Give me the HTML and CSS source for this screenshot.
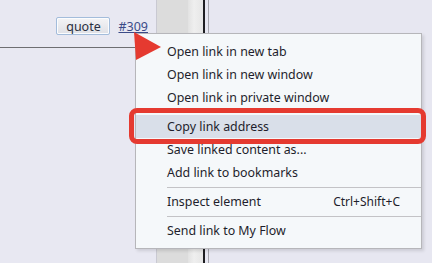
FILE: index.html
```html
<!DOCTYPE html>
<html>
<head>
  <title>Thread</title>
  <link rel="stylesheet" href="styles.css">
</head>
<body>
  <div class="window">
    <div class="thread">
      <div class="post">
        <div class="post-footer">
          <button class="quote">quote</button>
          <a class="permalink" href="#309">#309</a>
        </div>
      </div>
    </div>
    <div class="scroll-track"></div>
    <div class="scroll-edge"></div>
    <div class="frame-line"></div>
    <div class="frame-gap"></div>
    <div class="frame-line light"></div>
    <div class="desk"></div>
  </div>

  <ul class="context-menu">
    <li class="item">Open link in new tab</li>
    <li class="item">Open link in new window</li>
    <li class="item">Open link in private window</li>
    <li class="sep"></li>
    <li class="item active">Copy link address</li>
    <li class="item">Save linked content as...</li>
    <li class="item">Add link to bookmarks</li>
    <li class="sep"></li>
    <li class="item">Inspect element <span class="shortcut">Ctrl+Shift+C</span></li>
    <li class="sep"></li>
    <li class="item">Send link to My Flow</li>
  </ul>

  <div class="callout"></div>
  <svg class="pointer" width="30" height="30" viewBox="0 0 30 30">
    <polygon points="0,0 27,15 2,28" fill="#e53a30"/>
  </svg>
</body>
</html>
```

FILE: styles.css
```css
body {
  margin: 0;
  width: 432px;
  height: 263px;
  overflow: hidden;
  background-color: #e7e7f1;
  font-family: "Noto Sans", "Open Sans", sans-serif;
  position: relative;
}
.window {
  display: flex;
  height: 263px;
}
.thread {
  width: 156px;
  border-right: 1px solid #c9c9d2;
  background-color: #e8e8f2;
}
.post {
  height: 47px;
  border-bottom: 1px solid #6e6e72;
}
.post-footer {
  display: flex;
  justify-content: flex-end;
  align-items: center;
  gap: 8px;
  padding: 17px 8px 0 0;
}
.quote {
  width: 54px;
  height: 18px;
  padding: 0;
  font-family: inherit;
  font-size: 12.5px;
  color: #2a3040;
  border: 1px solid #a3bcdb;
  border-radius: 2px;
  box-shadow: inset 0 0 0 1px #fbfcfe;
  background: linear-gradient(#f4f4f6, #dfe0e6);
}
.permalink {
  font-size: 12.5px;
  color: #3b4b88;
  text-decoration: underline;
}
.scroll-track {
  width: 31px;
  background-color: #dcdcdc;
}
.scroll-edge {
  width: 15px;
  background: linear-gradient(to right, #e2e2e2, #efefef 40%, #e6e6e6);
}
.frame-line {
  width: 2px;
  background-color: #1e1e22;
}
.frame-line.light {
  width: 1px;
  background-color: #a6a6ae;
}
.frame-gap {
  width: 3px;
}
.desk {
  flex: 1;
}

.context-menu {
  position: absolute;
  left: 135px;
  top: 33px;
  width: 285px;
  margin: 0;
  padding: 6px 0;
  list-style: none;
  background-color: #f5f8fa;
  border: 1px solid #b6b6ba;
  box-shadow: 2px 2px 3px rgba(0, 0, 0, 0.12);
  font-size: 12.4px;
  color: #1e1e2c;
}
.item {
  display: flex;
  justify-content: space-between;
  align-items: center;
  height: 23px;
  padding: 0 21px 0 31px;
}
.item.active {
  background-color: #d9dfe9;
}
.shortcut {
  font-size: 12px;
}
.sep {
  height: 6px;
  display: flex;
  align-items: center;
  padding-left: 31px;
}
.sep::after {
  content: "";
  flex: 1;
  height: 1px;
  background-color: #c3c3c6;
}

.callout {
  position: absolute;
  left: 129px;
  top: 108px;
  width: 287px;
  height: 26px;
  border: 5px solid #e53a30;
  border-radius: 8px;
}
.pointer {
  position: absolute;
  left: 134px;
  top: 32px;
}
```
